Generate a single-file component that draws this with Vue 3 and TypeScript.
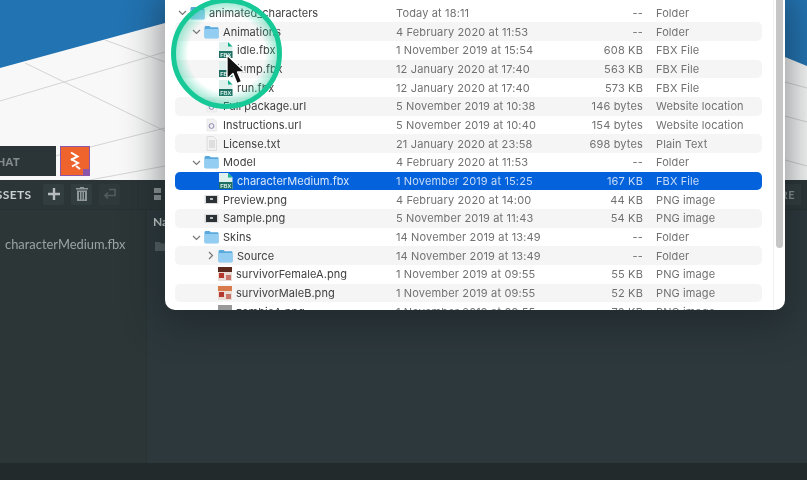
<template>
  <div class="editor">
    <div class="scene">
      <svg class="floor" width="807" height="180" viewBox="0 0 807 180">
        <polygon points="0,0 807,0 807,66 785,57 165,23 0,68" fill="#2273b2" />
        <g stroke="#d4d4d4" stroke-width="1" fill="none">
          <line x1="0" y1="101" x2="165" y2="52" />
          <line x1="25" y1="63" x2="165" y2="131" />
          <line x1="105" y1="40" x2="165" y2="62" />
          <line x1="0" y1="170" x2="165" y2="128" />
          <line x1="90" y1="180" x2="165" y2="166" />
          <line x1="785" y1="82" x2="807" y2="88" />
          <line x1="785" y1="116" x2="807" y2="122" />
          <line x1="785" y1="160" x2="807" y2="166" />
        </g>
      </svg>
      <div class="chat-btn">CHAT</div>
      <div class="logo-btn">
        <svg width="14" height="20" viewBox="0 0 14 20" fill="none" stroke="#fff" stroke-width="2">
          <path d="M3 1.500 9.500 5.500 3 9" />
          <path d="M3 8 10 12 4 15.500" />
          <path d="M8 15 12 18" />
        </svg>
        <span class="logo-corner"></span>
      </div>
    </div>

    <div class="toolbar">
      <span class="assets-title">ASSETS</span>
      <button class="tool-btn">
        <svg width="14" height="14" viewBox="0 0 14 14"><path d="M5.800 1h2.400v4.800H13v2.400H8.200V13H5.800V8.200H1V5.800h4.800z" fill="#b6bcbd" /></svg>
      </button>
      <button class="tool-btn">
        <svg width="12" height="14" viewBox="0 0 12 14" fill="#8f9798"><path d="M4 0h4v1h4v1.600H0V1h4zM1 3.500h10V14H1zm2 1.500v7.500h1V5zm2.500 0v7.500h1V5zM8 5v7.500h1V5z" /></svg>
      </button>
      <button class="tool-btn dim">
        <svg width="14" height="12" viewBox="0 0 14 12" fill="none" stroke="#525c5e" stroke-width="1.600"><path d="M2 7.500h10V1.500H6M5 4.500 2 7.500l3 3" /></svg>
      </button>
      <span class="tool-split"></span>
      <span class="view-icon"><i></i><i></i></span>
      <span class="share-btn">SHARE</span>
    </div>

    <div class="workspace">
      <aside class="sidebar">characterMedium.fbx</aside>
      <section class="content">
        <div class="col-head">Name</div>
        <svg class="dir-icon" width="13" height="10" viewBox="0 0 13 10"><path d="M0 1h5l1 1.500h7V10H0z" fill="#566164" /></svg>
      </section>
    </div>
    <div class="footer"></div>

    <div class="finder">
      <div
        v-for="(row, i) in rows"
        :key="row.name"
        class="row"
        :class="{ striped: i % 2 === 1, selected: row.name === 'characterMedium.fbx' }"
      >
        <div class="col-name" :class="'lvl-' + row.level">
          <svg v-if="row.open !== undefined" class="chev" width="9" height="9" viewBox="0 0 9 9" fill="none" stroke="#777" stroke-width="1.200">
            <path v-if="row.open" d="M1 3l3.500 3.500L8 3" />
            <path v-else d="M3 1l3.500 3.500L3 8" />
          </svg>
          <span v-else class="chev"></span>

          <svg v-if="row.icon === 'folder'" class="ico" width="15" height="14" viewBox="0 0 15 14">
            <path d="M.5 2.500C.5 1.600 1 1 2 1h3.500l1.300 1.300h6.400c.9 0 1.300.5 1.300 1.300V12c0 .8-.5 1.300-1.300 1.300H2c-1 0-1.500-.5-1.500-1.300z" fill="#5aa9dd" />
            <rect x=".5" y="4" width="14" height="9.300" rx="1" fill="#93cdf1" />
          </svg>

          <svg v-else-if="row.icon === 'fbx'" class="ico" width="15" height="16" viewBox="0 0 15 16">
            <path d="M1 0h9l4.500 4.500V16H1z" fill="#dff1ed" />
            <path d="M10 0v4.500h4.500z" fill="#17b08a" />
            <rect x="1" y="9" width="13.500" height="7" fill="#1f6f62" />
            <text x="2.200" y="15" class="fbx-label">FBX</text>
          </svg>

          <svg v-else-if="row.icon === 'url'" class="ico" width="15" height="14" viewBox="0 0 15 14">
            <path d="M3 1h7l2.500 2.500V13H3z" fill="#f1f1f1" stroke="#e2e2e2" stroke-width=".6" />
            <circle cx="7.500" cy="8" r="2.400" fill="none" stroke="#8f84b3" stroke-width="1" />
          </svg>

          <svg v-else-if="row.icon === 'txt'" class="ico" width="15" height="15" viewBox="0 0 15 15">
            <path d="M3 .5h6.500L12.500 3.500V14.500H3z" fill="#f2f2f2" stroke="#d4d4d4" stroke-width=".7" />
            <path d="M5 5h6M5 7h6M5 9h6M5 11h6" stroke="#c2c2c2" stroke-width=".8" />
          </svg>

          <svg v-else-if="row.icon === 'png'" class="ico" width="15" height="11" viewBox="0 0 15 11">
            <rect x=".5" y="1" width="14" height="9" fill="#dcdcdc" />
            <rect x="2" y="2" width="11" height="7" fill="#2c3135" />
            <rect x="6" y="4" width="3" height="2" fill="#b8bdc0" />
          </svg>

          <svg v-else class="ico" width="14" height="14" viewBox="0 0 14 14">
            <rect width="14" height="14" :fill="row.icon === 'skin3' ? '#9a9a9a' : '#e8dcd4'" />
            <template v-if="row.icon !== 'skin3'">
              <rect width="14" height="5" :fill="row.icon === 'skin1' ? '#5c2a1c' : '#d97a4c'" />
              <rect x="1" y="6" width="5" height="5" fill="#b4382e" />
              <rect x="8" y="8" width="5" height="5" fill="#c9766a" />
            </template>
          </svg>

          <span class="name-text">{{ row.name }}</span>
        </div>
        <div class="col-date">{{ row.date }}</div>
        <div class="col-size">{{ row.size }}</div>
        <div class="col-kind">{{ row.kind }}</div>
      </div>
      <div class="scroll-track"><div class="scroll-thumb"></div></div>
    </div>

    <div class="spotlight"></div>
    <svg class="cursor" width="22" height="32" viewBox="0 0 22 32">
      <path d="M2 1v24l6-5.500 4 10 4.500-2-4-9.500H20z" fill="#111" stroke="#fff" stroke-width="1.300" stroke-linejoin="round" />
    </svg>
  </div>
</template>

<script setup lang="ts">
interface Row {
  name: string
  date: string
  size: string
  kind: string
  level: number
  icon: string
  open?: boolean
}

const rows: Row[] = [
  { name: 'animated_characters', date: 'Today at 18:11', size: '--', kind: 'Folder', level: 0, icon: 'folder', open: true },
  { name: 'Animations', date: '4 February 2020 at 11:53', size: '--', kind: 'Folder', level: 1, icon: 'folder', open: true },
  { name: 'idle.fbx', date: '1 November 2019 at 15:54', size: '608 KB', kind: 'FBX File', level: 2, icon: 'fbx' },
  { name: 'jump.fbx', date: '12 January 2020 at 17:40', size: '563 KB', kind: 'FBX File', level: 2, icon: 'fbx' },
  { name: 'run.fbx', date: '12 January 2020 at 17:40', size: '573 KB', kind: 'FBX File', level: 2, icon: 'fbx' },
  { name: 'Full package.url', date: '5 November 2019 at 10:38', size: '146 bytes', kind: 'Website location', level: 1, icon: 'url' },
  { name: 'Instructions.url', date: '5 November 2019 at 10:40', size: '154 bytes', kind: 'Website location', level: 1, icon: 'url' },
  { name: 'License.txt', date: '21 January 2020 at 23:58', size: '698 bytes', kind: 'Plain Text', level: 1, icon: 'txt' },
  { name: 'Model', date: '4 February 2020 at 11:53', size: '--', kind: 'Folder', level: 1, icon: 'folder', open: true },
  { name: 'characterMedium.fbx', date: '1 November 2019 at 15:25', size: '167 KB', kind: 'FBX File', level: 2, icon: 'fbx' },
  { name: 'Preview.png', date: '4 February 2020 at 14:00', size: '44 KB', kind: 'PNG image', level: 1, icon: 'png' },
  { name: 'Sample.png', date: '5 November 2019 at 11:43', size: '54 KB', kind: 'PNG image', level: 1, icon: 'png' },
  { name: 'Skins', date: '14 November 2019 at 13:49', size: '--', kind: 'Folder', level: 1, icon: 'folder', open: true },
  { name: 'Source', date: '14 November 2019 at 13:49', size: '--', kind: 'Folder', level: 2, icon: 'folder', open: false },
  { name: 'survivorFemaleA.png', date: '1 November 2019 at 09:55', size: '55 KB', kind: 'PNG image', level: 2, icon: 'skin1' },
  { name: 'survivorMaleB.png', date: '1 November 2019 at 09:55', size: '52 KB', kind: 'PNG image', level: 2, icon: 'skin2' },
  { name: 'zombieA.png', date: '1 November 2019 at 09:55', size: '70 KB', kind: 'PNG image', level: 2, icon: 'skin3' }
]
</script>

<style scoped>
.editor {
  position: relative;
  display: flex;
  flex-direction: column;
  width: 807px;
  height: 480px;
  overflow: hidden;
  background: #2d383d;
  font-family: 'Inter', 'Liberation Sans', sans-serif;
  filter: blur(0.45px);
}

.scene {
  position: relative;
  flex: 0 0 180px;
  background: #f8f8f8;
}

.floor {
  display: block;
}

.chat-btn {
  position: absolute;
  left: -15px;
  top: 146px;
  width: 71px;
  height: 30px;
  box-sizing: border-box;
  padding-left: 4px;
  display: flex;
  align-items: center;
  background: #2b3436;
  color: #858d8e;
  font-family: 'Lato', sans-serif;
  font-size: 11px;
  font-weight: 900;
  letter-spacing: 0.4px;
}

.logo-btn {
  position: absolute;
  left: 60px;
  top: 146px;
  width: 30px;
  height: 30px;
  box-sizing: border-box;
  display: flex;
  align-items: center;
  justify-content: center;
  background: #ef632d;
  border: 1px solid #8c56ab;
}

.logo-corner {
  position: absolute;
  right: 0;
  bottom: 0;
  width: 6px;
  height: 6px;
  background: #8c56ab;
}

.toolbar {
  flex: 0 0 30px;
  display: flex;
  align-items: center;
  background: #2b3538;
  border-bottom: 1px solid #273033;
  box-sizing: border-box;
  padding-bottom: 1px;
}

.assets-title {
  margin-left: -13px;
  width: 56px;
  flex: none;
  font-family: 'Lato', sans-serif;
  font-size: 12px;
  font-weight: 700;
  letter-spacing: 0.4px;
  color: #c9cecf;
}

.tool-btn {
  width: 21px;
  height: 21px;
  margin-right: 7px;
  padding: 0;
  border: 0;
  border-radius: 2px;
  background: #323d40;
  display: flex;
  align-items: center;
  justify-content: center;
}

.tool-btn.dim {
  background: #2f393c;
}

.tool-split {
  width: 1px;
  height: 26px;
  margin-left: 11px;
  background: #273033;
}

.view-icon {
  display: flex;
  flex-direction: column;
  gap: 2px;
  margin-left: 15px;
}

.view-icon i {
  display: block;
  width: 7px;
  height: 5px;
  background: #8f9798;
}

.share-btn {
  margin-left: auto;
  flex: none;
  padding: 4px 6px 4px 8px;
  margin-right: 6px;
  background: #323d40;
  color: #8f9798;
  font-family: 'Lato', sans-serif;
  font-size: 11px;
  font-weight: 700;
  letter-spacing: 0.5px;
}

.workspace {
  flex: 1;
  display: flex;
  min-height: 0;
}

.sidebar {
  flex: 0 0 147px;
  box-sizing: border-box;
  padding: 26px 0 0 5px;
  background: #2c3637;
  border-right: 1px solid #293234;
  color: #9aa3a4;
  font-family: 'Lato', sans-serif;
  font-size: 12.9px;
}

.content {
  flex: 1;
  padding: 4px 0 0 6px;
}

.col-head {
  color: #c9cecf;
  font-family: 'Lato', sans-serif;
  font-size: 12px;
  font-weight: 700;
}

.dir-icon {
  display: block;
  margin: 12px 0 0 2px;
}

.footer {
  flex: 0 0 17px;
  background: #222a2c;
}

.finder {
  position: absolute;
  left: 165px;
  top: -10px;
  width: 620px;
  height: 320px;
  box-sizing: border-box;
  padding: 13.66px 0 0 10px;
  overflow: hidden;
  background: #fff;
  border-radius: 10px;
  box-shadow: 0 10px 36px 6px rgba(20, 26, 28, 0.45);
}

.row {
  display: flex;
  align-items: center;
  width: 587px;
  height: 18.68px;
  border-radius: 5px;
  font-size: 11px;
  letter-spacing: 0.15px;
  color: #717171;
  white-space: nowrap;
}

.row.striped {
  background: #f5f5f5;
}

.row.selected {
  background: #0463dc;
  color: #c9dcf6;
}

.col-name {
  flex: 0 0 221px;
  display: flex;
  align-items: center;
  box-sizing: border-box;
  color: #404040;
  letter-spacing: 0.05px;
}

.row.selected .col-name {
  color: #d9e8fb;
}

.lvl-0 {
  padding-left: 3px;
}

.lvl-1 {
  padding-left: 17px;
}

.lvl-2 {
  padding-left: 31px;
}

.chev {
  flex: 0 0 9px;
  margin-right: 3px;
}

.ico {
  flex: none;
  margin-right: 4px;
}

.fbx-label {
  font-family: 'Liberation Sans', sans-serif;
  font-size: 5.5px;
  font-weight: 700;
  fill: #dff3ee;
}

.col-date {
  flex: 0 0 190px;
}

.col-size {
  flex: 0 0 57px;
  text-align: right;
}

.col-kind {
  margin-left: 13px;
  letter-spacing: 0.1px;
}

.scroll-track {
  position: absolute;
  right: 0;
  top: 0;
  bottom: 0;
  width: 12px;
  box-sizing: border-box;
  padding: 0 2px;
  border-left: 1px solid #f1f1f1;
}

.scroll-thumb {
  height: 258px;
  border-radius: 4px;
  background: #c6c6c6;
}

.spotlight {
  position: absolute;
  left: 171px;
  top: -2px;
  width: 111px;
  height: 111px;
  box-sizing: border-box;
  border: 5px solid #17c996;
  border-radius: 50%;
  background: radial-gradient(closest-side, rgba(23, 201, 150, 0) 76%, rgba(23, 201, 150, 0.38) 100%);
}

.cursor {
  position: absolute;
  left: 225px;
  top: 54px;
}
</style>

<style>
html,
body {
  margin: 0;
  background: #2d383d;
}
</style>
